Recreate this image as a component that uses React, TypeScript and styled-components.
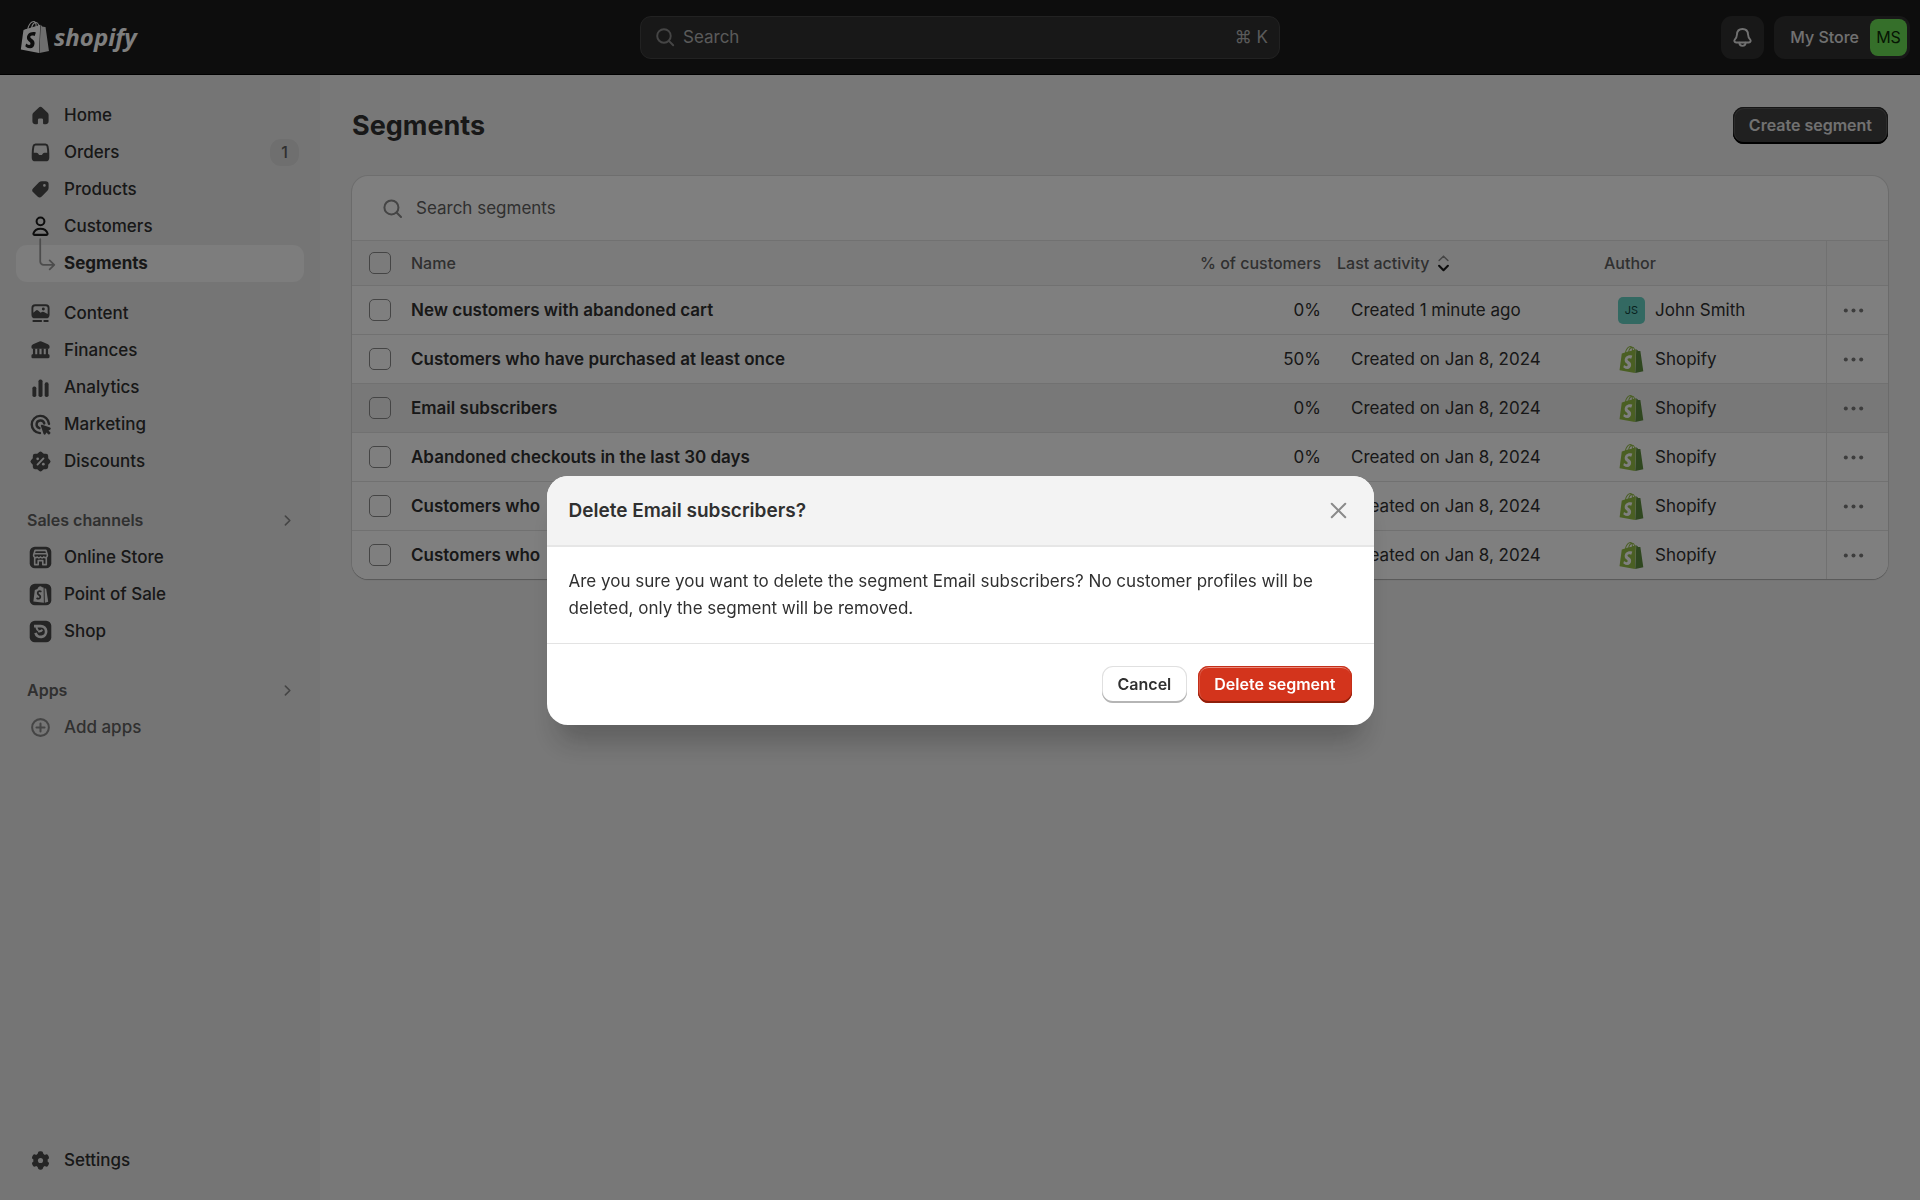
import React from "react";
import styled, { createGlobalStyle } from "styled-components";

const GlobalStyle = createGlobalStyle`
  *, *::before, *::after { box-sizing: border-box; }
  html, body { margin: 0; padding: 0; background: #f1f1f1; }
  body, button, input {
    font-family: Inter, "Liberation Sans", Arial, sans-serif;
    font-size: 17px;
    line-height: 27px;
    color: #303030;
  }
  button { border: 0; padding: 0; background: none; cursor: pointer; }
  ul { list-style: none; margin: 0; padding: 0; }
  h1, h2, p { margin: 0; }
`;

/* ---------- layout ---------- */

const Shell = styled.div`
  display: flex;
  flex-direction: column;
  min-height: 100vh;
`;

const TopBar = styled.header`
  display: grid;
  grid-template-columns: 1fr minmax(240px, 640px) 1fr;
  align-items: center;
  height: 75px;
  padding: 0 10px;
  background: #1a1a1a;
  border-bottom: 1px solid #000;
`;

const Columns = styled.div`
  display: flex;
  flex: 1;
`;

/* ---------- top bar ---------- */

const Brand = styled.a`
  display: flex;
  align-items: center;
  gap: 3px;
  padding-left: 9px;
  color: #fff;
  text-decoration: none;
`;

const BrandName = styled.span`
  font: italic 700 24px/32px "Open Sans", "Noto Sans", sans-serif;
`;

const GlobalSearch = styled.button`
  display: flex;
  align-items: center;
  gap: 5px;
  height: 43px;
  padding: 0 11px;
  border: 1px solid #444;
  border-radius: 11px;
  background: #303030;
  color: #b5b5b5;
`;

const Shortcut = styled.span`
  margin-left: auto;
`;

const TopActions = styled.div`
  display: flex;
  justify-content: flex-end;
  gap: 10px;
`;

const BellButton = styled.button`
  display: grid;
  place-items: center;
  width: 43px;
  height: 43px;
  border-radius: 11px;
  background: #303030;
  color: #e3e3e3;
`;

const StoreButton = styled.button`
  display: flex;
  align-items: center;
  gap: 11px;
  height: 43px;
  padding: 0 3px 0 16px;
  border-radius: 11px;
  background: #303030;
  color: #e3e3e3;
  font-size: 16px;
  font-weight: 500;
`;

const StoreAvatar = styled.span`
  display: grid;
  place-items: center;
  width: 37px;
  height: 37px;
  border-radius: 8px;
  background: #6bdf55;
  color: #0c2c06;
  font-weight: 400;
`;

/* ---------- sidebar ---------- */

const Sidebar = styled.nav`
  display: flex;
  flex-direction: column;
  flex: 0 0 320px;
  padding: 22px 16px 21px;
  background: #ebebeb;
`;

const NavGroup = styled.ul<{ $gap?: number }>`
  margin-top: ${(p) => p.$gap ?? 0}px;
`;

const NavBottom = styled.ul`
  margin-top: auto;
`;

const NavLink = styled.a<{ $active?: boolean; $muted?: boolean }>`
  display: flex;
  align-items: center;
  gap: 10px;
  height: 37px;
  padding: 0 5px 0 11px;
  border-radius: 11px;
  background: ${(p) => (p.$active ? "#fafafa" : "transparent")};
  color: ${(p) => (p.$muted ? "#616161" : "#303030")};
  font-weight: ${(p) => (p.$active ? 650 : 550)};
  text-decoration: none;
`;

const NavBadge = styled.span`
  margin-left: auto;
  min-width: 29px;
  border-radius: 11px;
  background: #dedede;
  color: #616161;
  font-size: 16px;
  text-align: center;
`;

const SectionButton = styled.button`
  display: flex;
  align-items: center;
  justify-content: space-between;
  width: 100%;
  height: 37px;
  padding: 0 6px 0 11px;
  color: #616161;
  font-size: 16px;
  font-weight: 600;
`;

const Glyph = styled.svg<{ $size?: number; $color?: string }>`
  flex: none;
  display: block;
  width: ${(p) => p.$size ?? 27}px;
  height: ${(p) => p.$size ?? 27}px;
  color: ${(p) => p.$color ?? "#4a4a4a"};
  overflow: visible;
`;

/* ---------- page ---------- */

const Main = styled.main`
  flex: 1;
  min-width: 0;
  padding: 32px;
`;

const PageHead = styled.div`
  display: flex;
  align-items: center;
  justify-content: space-between;
  margin-bottom: 32px;
`;

const PageTitle = styled.h1`
  font-size: 27px;
  line-height: 32px;
  font-weight: 700;
`;

const Button = styled.button<{ $kind: "dark" | "plain" | "danger" }>`
  height: 37px;
  padding: 0 16px;
  border-radius: 11px;
  font-size: 16px;
  line-height: 21px;
  font-weight: 600;
  ${(p) =>
    p.$kind === "dark" &&
    `background: #404040; color: #e3e3e3;
     box-shadow: inset 0 -2px 0 #000, inset 0 0 0 1px #2c2c2c, inset 0 0 0 2px #585858;`}
  ${(p) =>
    p.$kind === "plain" &&
    `background: #fff; color: #303030;
     box-shadow: inset 0 -2px 0 #b5b5b5, inset 0 0 0 1px #e0e0e0;`}
  ${(p) =>
    p.$kind === "danger" &&
    `background: #d3341c; color: #fff;
     box-shadow: inset 0 -2px 0 #8e1f0b, inset 0 0 0 1px #c42f19, inset 0 2px 0 #e98b7d, inset 1px 0 0 1px #d95542;`}
`;

const Card = styled.section`
  overflow: hidden;
  border-radius: 16px;
  background: #fff;
  box-shadow: 0 1px 1px #b0b0b0, 0 0 0 1px #dcdcdc;
`;

const SearchField = styled.label`
  display: flex;
  align-items: center;
  gap: 8px;
  height: 64px;
  padding: 0 27px;
`;

const SearchInput = styled.input`
  flex: 1;
  padding: 0 2px;
  border: 0;
  outline: 0;
  background: transparent;
  &::placeholder { color: #616161; opacity: 1; }
`;

const Table = styled.table`
  width: 100%;
  table-layout: fixed;
  border-collapse: separate;
  border-spacing: 0;
`;

const Col = styled.col<{ $width?: number }>`
  width: ${(p) => (p.$width ? `${p.$width}px` : "auto")};
`;

const HeadCell = styled.th<{ $right?: boolean; $divided?: boolean }>`
  height: 45px;
  padding: 0 8px;
  border-top: 1px solid #e3e3e3;
  border-left: ${(p) => (p.$divided ? "1px solid #e3e3e3" : "0")};
  background: #f7f7f7;
  color: #616161;
  font-size: 16px;
  font-weight: 550;
  line-height: 21px;
  text-align: ${(p) => (p.$right ? "right" : "left")};
`;

const Cell = styled.td<{ $right?: boolean; $inset?: boolean; $divided?: boolean; $strong?: boolean }>`
  height: 49px;
  padding: 0 8px 0 ${(p) => (p.$inset ? 22 : 8)}px;
  border-top: 1px solid #e3e3e3;
  border-left: ${(p) => (p.$divided ? "1px solid #e3e3e3" : "0")};
  font-weight: ${(p) => (p.$strong ? 600 : 400)};
  text-align: ${(p) => (p.$right ? "right" : "left")};
  white-space: nowrap;
`;

const Row = styled.tr<{ $hover?: boolean }>`
  background: ${(p) => (p.$hover ? "#f1f1f1" : "#fff")};
`;

const Check = styled.input`
  appearance: none;
  display: block;
  width: 22px;
  height: 22px;
  margin: 0 0 0 9px;
  border: 1px solid #8a8a8a;
  border-radius: 5px;
  background: transparent;
`;

const SortButton = styled.button`
  display: flex;
  align-items: center;
  gap: 4px;
  color: #616161;
  font-size: 16px;
  font-weight: 550;
  line-height: 21px;
`;

const Author = styled.span`
  display: flex;
  align-items: center;
  gap: 10px;
`;

const Initials = styled.span`
  display: grid;
  place-items: center;
  width: 27px;
  height: 27px;
  border-radius: 5px;
  background: #66d2c5;
  color: #12453f;
  font-size: 11px;
  line-height: 16px;
`;

const MoreButton = styled.button`
  display: grid;
  place-items: center;
  width: 37px;
  height: 37px;
`;

/* ---------- dialog ---------- */

const Backdrop = styled.div`
  position: fixed;
  inset: 0;
  display: grid;
  place-items: center;
  background: rgba(0, 0, 0, 0.5);
`;

const Dialog = styled.div`
  width: min(827px, 94vw);
  overflow: hidden;
  border-radius: 21px;
  background: #fff;
  box-shadow: 0 27px 27px -11px rgba(26, 26, 26, 0.28);
`;

const DialogHead = styled.div`
  display: flex;
  align-items: center;
  justify-content: space-between;
  height: 71px;
  padding: 0 22px;
  border-bottom: 2px solid #e6e6e6;
  background: #f3f3f3;
`;

const DialogTitle = styled.h2`
  font-size: 19px;
  line-height: 27px;
  font-weight: 600;
`;

const DialogBody = styled.p`
  padding: 21px 22px;
`;

const DialogFoot = styled.div`
  display: flex;
  justify-content: flex-end;
  gap: 11px;
  padding: 22px;
  border-top: 1px solid #e3e3e3;
`;

/* ---------- drawings ---------- */

const BAG_SIDE =
  "M15.337 23.979l7.216-1.561s-2.604-17.613-2.625-17.73c-.018-.116-.114-.192-.211-.192s-1.929-.136-1.929-.136-1.275-1.274-1.439-1.411c-.045-.037-.075-.057-.121-.074l-.914 21.104h.023z";
const BAG_LETTER =
  "M11.71 11.305s-.81-.424-1.774-.424c-1.447 0-1.504.906-1.504 1.141 0 1.232 3.24 1.715 3.24 4.629 0 2.295-1.44 3.76-3.406 3.76-2.354 0-3.54-1.465-3.54-1.465l.646-2.086s1.245 1.066 2.28 1.066c.675 0 .975-.545.975-.932 0-1.619-2.654-1.694-2.654-4.359-.034-2.237 1.571-4.416 4.827-4.416 1.257 0 1.875.361 1.875.361l-.945 2.715-.02.01z";
const BAG_FRONT =
  "M11.17.83c.136 0 .271.038.405.135-.984.465-2.064 1.639-2.508 3.992-.656.213-1.293.405-1.889.578C7.697 3.75 8.951.84 11.17.84V.83zm1.235 2.949v.135c-.754.232-1.583.484-2.394.736.466-1.777 1.333-2.645 2.085-2.971.193.501.309 1.176.309 2.1zm.539-2.234c.694.074 1.141.867 1.429 1.755-.349.114-.735.231-1.158.366v-.252c0-.752-.096-1.371-.271-1.871v.002zm2.992 1.289c-.02 0-.06.021-.078.021s-.289.075-.714.21c-.423-1.233-1.176-2.37-2.508-2.37h-.115C12.135.209 11.669 0 11.265 0 8.159 0 6.675 3.877 6.21 5.846c-1.194.365-2.063.636-2.16.674-.675.213-.694.232-.772.87-.075.462-1.83 14.063-1.83 14.063L15.009 24l.927-21.166z";

const Bag = ({ size, front, side, letter }: { size: number; front: string; side: string; letter: string }) => (
  <Glyph $size={size} viewBox="0 0 24 24" aria-hidden="true">
    <path d={BAG_FRONT} fill={front} fillRule="evenodd" />
    <path d={BAG_SIDE} fill={side} />
    <path d={BAG_LETTER} fill={letter} />
  </Glyph>
);

const line = {
  fill: "none",
  stroke: "currentColor",
  strokeLinecap: "round" as const,
  strokeLinejoin: "round" as const,
};

const Icon = ({ children, size, color }: { children: React.ReactNode; size?: number; color?: string }) => (
  <Glyph $size={size} $color={color} viewBox="0 0 20 20" fill="currentColor" aria-hidden="true">
    {children}
  </Glyph>
);

const icons: Record<string, React.ReactNode> = {
  home: (
    <Icon>
      <path d="M8.6 4.2a2 2 0 0 1 2.8 0l3.9 3.7a2.3 2.3 0 0 1 .7 1.7v4.7a2.1 2.1 0 0 1-2.1 2.1h-1.3a.7.7 0 0 1-.7-.7v-2.4a1 1 0 0 0-1-1H9.1a1 1 0 0 0-1 1v2.4a.7.7 0 0 1-.7.7H6.1A2.1 2.1 0 0 1 4 14.3V9.6a2.3 2.3 0 0 1 .7-1.7z" />
    </Icon>
  ),
  orders: (
    <Icon>
      <path
        fillRule="evenodd"
        d="M6.3 3.3h7.4a2.3 2.3 0 0 1 2.2 1.9c.4 1.9.6 3.7.6 5.6v3a2.7 2.7 0 0 1-2.7 2.7H6.2a2.7 2.7 0 0 1-2.7-2.7v-3c0-1.9.2-3.7.6-5.6a2.3 2.3 0 0 1 2.2-1.9zm.2 1.5a1 1 0 0 0-1 .8C5.200 7.100 5 8.600 5 10.200h2c.5 0 .9.2 1.200.6l.5.7c.2.300.5.4.8.4h1c.3 0 .6-.1.8-.4l.5-.7c.3-.4.7-.6 1.200-.6h2c0-1.600-.2-3.100-.5-4.600a1 1 0 0 0-1-.8z"
      />
    </Icon>
  ),
  products: (
    <Icon>
      <path
        fillRule="evenodd"
        d="M11 3.800h2.900A2.100 2.100 0 0 1 16 5.900v2.900a3 3 0 0 1-.9 2.100l-4.200 4.300a2.200 2.200 0 0 1-3.100 0l-3.200-3.100a2.200 2.200 0 0 1 0-3.100l4.300-4.300A3 3 0 0 1 11 3.800zm1.900 4.200a1 1 0 1 0 0-2 1 1 0 0 0 0 2z"
      />
    </Icon>
  ),
  customers: (
    <Icon color="#1a1a1a">
      <g {...line} strokeWidth="1.5">
        <circle cx="10" cy="6.2" r="2.900" />
        <path d="M4.800 15C5.500 12.900 7.500 11.600 10 11.600s4.500 1.300 5.200 3.400c.2.600-.2 1.200-.9 1.200H5.700c-.7 0-1.100-.6-.9-1.200z" />
      </g>
    </Icon>
  ),
  branch: (
    <Icon color="#999">
      <path {...line} strokeWidth="1.3" d="M9.800-8V8.500A2.500 2.500 0 0 0 12.300 11H20M16.800 7.700 20.200 11l-3.400 3.300" />
    </Icon>
  ),
  content: (
    <Icon>
      <path
        fillRule="evenodd"
        d="M6 3.200h8a2.700 2.700 0 0 1 2.700 2.700v5a2.700 2.700 0 0 1-2.700 2.700H6a2.700 2.700 0 0 1-2.700-2.700v-5A2.700 2.700 0 0 1 6 3.200zm0 1.400a1.300 1.300 0 0 0-1.300 1.300v3.600l1.900-1.700a1.200 1.200 0 0 1 1.600 0l1.900 1.700.9-.6a1.300 1.300 0 0 1 1.500 0l2.800 1.500V5.900A1.300 1.300 0 0 0 14 4.600zm6.100 3.200a1.100 1.100 0 1 1 0-2.200 1.100 1.100 0 0 1 0 2.200z"
      />
      <path {...line} strokeWidth="1.4" d="M4.700 15.600h5.800M12.800 15.600h2.600" />
    </Icon>
  ),
  finances: (
    <Icon>
      <path d="M9.200 3.300a2 2 0 0 1 1.600 0l4.700 2.100c.7.300 1.200 1 1.200 1.700v.4c0 .7-.5 1.200-1.200 1.200h-11c-.7 0-1.200-.5-1.200-1.200v-.4c0-.7.5-1.400 1.200-1.700z" />
      <path d="M4.400 8.500h1.700v5H4.400zM7.600 8.500h1.600v5H7.600zM10.800 8.500h1.600v5h-1.600zM13.900 8.500h1.700v5h-1.700z" />
      <path d="M4.300 12.700h11.400c.6 0 1 .4 1 1v1.200c0 .5-.4.900-.9.900H4.200a.9.900 0 0 1-.9-.9v-1.200c0-.6.4-1 1-1z" />
    </Icon>
  ),
  analytics: (
    <Icon>
      <rect x="4" y="9.3" width="2.9" height="7.7" rx="1.3" />
      <rect x="8.5" y="4" width="3" height="13" rx="1.3" />
      <rect x="13.1" y="6.2" width="2.9" height="10.8" rx="1.3" />
    </Icon>
  ),
  marketing: (
    <Icon>
      <g {...line} strokeWidth="1.8">
        <path d="M16.300 9.500A6.400 6.400 0 1 0 9.600 16.400" />
        <path d="M12.800 9.200A2.900 2.900 0 1 0 9.200 12.700" />
      </g>
      <path d="M10.300 11.100c-.2-.6.300-1.100.9-.9l5.900 2.100c.7.200.7 1.200 0 1.500l-1.200.6 1.300 1.300c.3.300.3.700 0 1l-.5.500c-.3.300-.7.300-1 0l-1.300-1.300-.6 1.200c-.3.700-1.200.6-1.500 0z" />
    </Icon>
  ),
  discounts: (
    <Icon>
      <rect x="4.300" y="4.300" width="11.400" height="11.400" rx="1.600" />
      <rect x="4.300" y="4.300" width="11.400" height="11.400" rx="1.600" transform="rotate(45 10 10)" />
      <g color="#ebebeb">
        <path {...line} strokeWidth="1.400" d="M7.800 12.300l4.400-4.600" />
        <circle cx="7.900" cy="8" r="1" fill="currentColor" />
        <circle cx="12.100" cy="12" r="1" fill="currentColor" />
      </g>
    </Icon>
  ),
  store: (
    <Icon>
      <rect x="2" y="2" width="16" height="16" rx="3.800" />
      <g color="#ebebeb">
        <path {...line} strokeWidth="1.200" d="M6 4.700h8l1.100 3.400v.5a1.500 1.500 0 0 1-2.600 1 1.800 1.800 0 0 1-2.500 0 1.800 1.800 0 0 1-2.500 0 1.500 1.500 0 0 1-2.600-1v-.5zM5.200 7.200h9.600M5.700 10.500v4.800h2.600v-3h3.400v3h2.600v-4.800" />
      </g>
    </Icon>
  ),
  pos: (
    <Icon>
      <rect x="2" y="2" width="16" height="16" rx="3.800" />
      <path fill="#ebebeb" d="M5.800 6.600l1.900-.6C8.100 4.700 9 3.900 9.900 3.900c.5 0 .9.300 1.200.7l1.200.3.200 11.300L4.700 15.200z" />
      <path fill="#ebebeb" d="M13 5.300l1.200.4 1.500 9.600-2.500.8z" />
      <path fill="none" stroke="#4a4a4a" strokeWidth="1.300" d="M10.700 7.900c-1.400-.7-2.800-.2-2.800 1 0 1.500 2.100 1.500 2 3-.1 1.300-1.600 1.600-2.800.7" />
    </Icon>
  ),
  shop: (
    <Icon>
      <rect x="2" y="2" width="16" height="16" rx="3.800" />
      <path fill="none" stroke="#ebebeb" strokeWidth="2" d="M5.200 6h5a4 4 0 1 1-3.900 5" />
      <path fill="none" stroke="#ebebeb" strokeWidth="1.500" d="M7 6.300c0 1.400.4 2.300 1.200 3M8.200 9.800c1.600.3 2.700-.1 3.100-1.200" />
    </Icon>
  ),
  add: (
    <Icon color="#8a8a8a">
      <g {...line} strokeWidth="1.500">
        <circle cx="10" cy="10" r="6.200" />
        <path d="M10 7v6M7 10h6" />
      </g>
    </Icon>
  ),
  settings: (
    <Icon>
      {[0, 60, 120].map((angle) => (
        <rect key={angle} x="8" y="3.200" width="4" height="13.600" rx="1.600" transform={`rotate(${angle} 10 10)`} />
      ))}
      <circle cx="10" cy="10" r="5.300" />
      <circle cx="10" cy="10" r="1.900" fill="#ebebeb" />
    </Icon>
  ),
};

const ChevronIcon = () => (
  <Icon color="#8a8a8a" size={21}>
    <path {...line} strokeWidth="1.600" d="M8 5.800l4.200 4.200L8 14.200" />
  </Icon>
);

const SearchIcon = ({ size, color }: { size: number; color: string }) => (
  <Icon size={size} color={color}>
    <g {...line} strokeWidth="1.500">
      <circle cx="9.200" cy="9.200" r="5.200" />
      <path d="M13 13l3.300 3.300" />
    </g>
  </Icon>
);

/* ---------- data ---------- */

type NavItem = { label: string; icon: string; badge?: number; active?: boolean; muted?: boolean };

const primary: NavItem[] = [
  { label: "Home", icon: "home" },
  { label: "Orders", icon: "orders", badge: 1 },
  { label: "Products", icon: "products" },
  { label: "Customers", icon: "customers" },
  { label: "Segments", icon: "branch", active: true },
];
const secondary: NavItem[] = [
  { label: "Content", icon: "content" },
  { label: "Finances", icon: "finances" },
  { label: "Analytics", icon: "analytics" },
  { label: "Marketing", icon: "marketing" },
  { label: "Discounts", icon: "discounts" },
];
const channels: NavItem[] = [
  { label: "Online Store", icon: "store" },
  { label: "Point of Sale", icon: "pos" },
  { label: "Shop", icon: "shop" },
];

const segments = [
  { id: 1, name: "New customers with abandoned cart", share: "0%", activity: "Created 1 minute ago", author: "John Smith" },
  { id: 2, name: "Customers who have purchased at least once", share: "50%", activity: "Created on Jan 8, 2024", author: "Shopify" },
  { id: 3, name: "Email subscribers", share: "0%", activity: "Created on Jan 8, 2024", author: "Shopify", hover: true },
  { id: 4, name: "Abandoned checkouts in the last 30 days", share: "0%", activity: "Created on Jan 8, 2024", author: "Shopify" },
  { id: 5, name: "Customers who", share: "", activity: "Created on Jan 8, 2024", author: "Shopify" },
  { id: 6, name: "Customers who", share: "", activity: "Created on Jan 8, 2024", author: "Shopify" },
];

const NavItems = ({ items }: { items: NavItem[] }) => (
  <>
    {items.map((item) => (
      <li key={item.label}>
        <NavLink href="#" $active={item.active} $muted={item.muted} aria-current={item.active ? "page" : undefined}>
          {icons[item.icon]}
          {item.label}
          {item.badge !== undefined && <NavBadge>{item.badge}</NavBadge>}
        </NavLink>
      </li>
    ))}
  </>
);

export default function App() {
  return (
    <>
      <GlobalStyle />
      <Shell>
        <TopBar>
          <Brand href="#">
            <Bag size={32} front="#fff" side="#dcdcdc" letter="#1a1a1a" />
            <BrandName>shopify</BrandName>
          </Brand>
          <GlobalSearch type="button">
            <SearchIcon size={26} color="#8a8a8a" />
            Search
            <Shortcut>⌘ K</Shortcut>
          </GlobalSearch>
          <TopActions>
            <BellButton type="button" aria-label="Notifications">
              <Icon color="#e3e3e3">
                <g {...line} strokeWidth="1.400">
                  <path d="M10 3.700c-2.500 0-4 1.800-4.100 4.100-.1 2-.6 2.700-1.500 3.600-.9 1-.4 2.300.9 2.300h9.400c1.300 0 1.800-1.300.9-2.300-.9-.9-1.400-1.600-1.500-3.600C14 5.500 12.500 3.700 10 3.700z" />
                  <path d="M7.700 13.900a2.300 2.300 0 0 0 4.600 0" />
                </g>
              </Icon>
            </BellButton>
            <StoreButton type="button">
              My Store
              <StoreAvatar>MS</StoreAvatar>
            </StoreButton>
          </TopActions>
        </TopBar>

        <Columns>
          <Sidebar>
            <NavGroup>
              <NavItems items={primary} />
            </NavGroup>
            <NavGroup $gap={13}>
              <NavItems items={secondary} />
            </NavGroup>
            <NavGroup $gap={22}>
              <li>
                <SectionButton type="button">
                  Sales channels
                  <ChevronIcon />
                </SectionButton>
              </li>
              <NavItems items={channels} />
            </NavGroup>
            <NavGroup $gap={22}>
              <li>
                <SectionButton type="button">
                  Apps
                  <ChevronIcon />
                </SectionButton>
              </li>
              <NavItems items={[{ label: "Add apps", icon: "add", muted: true }]} />
            </NavGroup>
            <NavBottom>
              <NavItems items={[{ label: "Settings", icon: "settings" }]} />
            </NavBottom>
          </Sidebar>

          <Main>
            <PageHead>
              <PageTitle>Segments</PageTitle>
              <Button type="button" $kind="dark">
                Create segment
              </Button>
            </PageHead>

            <Card>
              <SearchField>
                <SearchIcon size={27} color="#8a8a8a" />
                <SearchInput type="text" placeholder="Search segments" aria-label="Search segments" />
              </SearchField>
              <Table>
                <colgroup>
                  <Col $width={51} />
                  <Col />
                  <Col $width={160} />
                  <Col $width={267} />
                  <Col $width={230} />
                  <Col $width={62} />
                </colgroup>
                <thead>
                  <tr>
                    <HeadCell>
                      <Check type="checkbox" aria-label="Select all segments" />
                    </HeadCell>
                    <HeadCell>Name</HeadCell>
                    <HeadCell $right>% of customers</HeadCell>
                    <HeadCell>
                      <SortButton type="button">
                        Last activity
                        <Icon size={21}>
                          <path {...line} stroke="#8a8a8a" strokeWidth="1.400" d="M5.800 7.200L10 3l4.200 4.200" />
                          <path {...line} stroke="#1a1a1a" strokeWidth="2" d="M5.800 12.200L10 16.400l4.200-4.200" />
                        </Icon>
                      </SortButton>
                    </HeadCell>
                    <HeadCell>Author</HeadCell>
                    <HeadCell $divided aria-label="Actions" />
                  </tr>
                </thead>
                <tbody>
                  {segments.map((s) => (
                    <Row key={s.id} $hover={s.hover}>
                      <Cell>
                        <Check type="checkbox" aria-label={`Select ${s.name}`} />
                      </Cell>
                      <Cell $strong>{s.name}</Cell>
                      <Cell $right>{s.share}</Cell>
                      <Cell $inset>{s.activity}</Cell>
                      <Cell $inset>
                        <Author>
                          {s.author === "Shopify" ? (
                            <Bag size={27} front="#95bf47" side="#5e8e3e" letter="#fff" />
                          ) : (
                            <Initials>JS</Initials>
                          )}
                          {s.author}
                        </Author>
                      </Cell>
                      <Cell $divided>
                        <MoreButton type="button" aria-label={`Actions for ${s.name}`}>
                          <Icon color="#7a7a7a">
                            <circle cx="4.300" cy="10" r="1.500" />
                            <circle cx="10" cy="10" r="1.500" />
                            <circle cx="15.700" cy="10" r="1.500" />
                          </Icon>
                        </MoreButton>
                      </Cell>
                    </Row>
                  ))}
                </tbody>
              </Table>
            </Card>
          </Main>
        </Columns>
      </Shell>

      <Backdrop>
        <Dialog role="dialog" aria-modal="true" aria-labelledby="dialog-title">
          <DialogHead>
            <DialogTitle id="dialog-title">Delete Email subscribers?</DialogTitle>
            <button type="button" aria-label="Close">
              <Icon color="#8a8a8a">
                <path {...line} strokeWidth="1.500" d="M5 5l10 10M15 5L5 15" />
              </Icon>
            </button>
          </DialogHead>
          <DialogBody>
            Are you sure you want to delete the segment Email subscribers? No customer profiles will be deleted, only
            the segment will be removed.
          </DialogBody>
          <DialogFoot>
            <Button type="button" $kind="plain">
              Cancel
            </Button>
            <Button type="button" $kind="danger">
              Delete segment
            </Button>
          </DialogFoot>
        </Dialog>
      </Backdrop>
    </>
  );
}
